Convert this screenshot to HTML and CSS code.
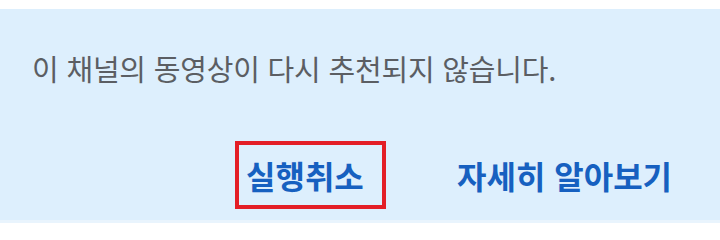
FILE: index.html
```html
<!DOCTYPE html>
<html lang="ko">
<head>
<meta charset="utf-8">
<link rel="stylesheet" href="styles.css">
</head>
<body>
<div class="top-strip"></div>
<div class="panel">
  <p class="message">이 채널의 동영상이 다시 추천되지 않습니다.</p>
  <div class="actions">
    <button class="action undo">실행취소</button>
    <button class="action learn">자세히 알아보기</button>
  </div>
</div>
<div class="bottom-strip"></div>
</body>
</html>
```

FILE: styles.css
```css
html, body {
  margin: 0;
  padding: 0;
  background: #ffffff;
  width: 720px;
  height: 223px;
  overflow: hidden;
  font-family: "Noto Sans CJK KR", "Noto Sans", sans-serif;
}

.top-strip {
  height: 9px;
  background: #ffffff;
}

.panel {
  height: 211px;
  background: #ddeffd;
  display: flex;
  flex-direction: column;
  box-sizing: border-box;
  padding: 0 0 0 32px;
}

.bottom-strip {
  height: 3px;
  background: #e9f4fd;
}

.message {
  margin: 0;
  padding-top: 41px;
  font-size: 29px;
  line-height: 36px;
  color: #5b5e63;
  letter-spacing: -0.2px;
}

.actions {
  display: flex;
  justify-content: flex-start;
  align-items: center;
  gap: 71px;
  margin-top: 55px;
  padding-left: 203px;
}

.action {
  font-family: inherit;
  background: transparent;
  border: none;
  padding: 0;
  margin: 0;
  font-size: 32px;
  font-weight: 700;
  color: #1660c0;
  line-height: 40px;
  cursor: pointer;
  text-align: left;
  white-space: nowrap;
}

.undo {
  border: 4px solid #e31e26;
  padding: 10px 0 10px 7px;
  width: 151px;
  height: 68px;
  box-sizing: border-box;
}
```
